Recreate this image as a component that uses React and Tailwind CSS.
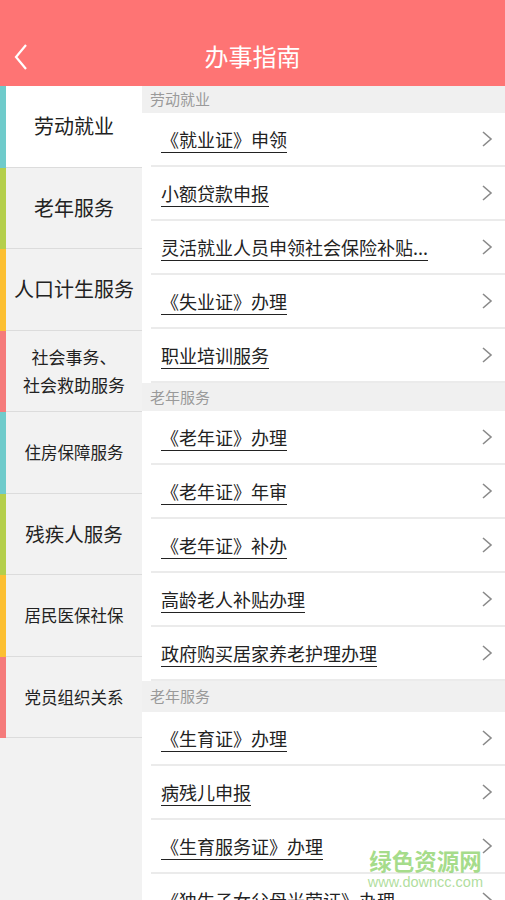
import React from 'react';

const menu = [
    { lines: ['劳动就业'], size: 'text-[20px]', strip: 'bg-[#6fcbcb]', active: true },
    { lines: ['老年服务'], size: 'text-[20px]', strip: 'bg-[#b4cf4b]' },
    { lines: ['人口计生服务'], size: 'text-[20px]', strip: 'bg-[#fcbf31]' },
    { lines: ['社会事务、', '社会救助服务'], size: 'text-[17px]', strip: 'bg-[#f57b7b]' },
    { lines: ['住房保障服务'], size: 'text-[16.5px]', strip: 'bg-[#6fcbcb]' },
    { lines: ['残疾人服务'], size: 'text-[19.5px]', strip: 'bg-[#b4cf4b]' },
    { lines: ['居民医保社保'], size: 'text-[16.5px]', strip: 'bg-[#fcbf31]' },
    { lines: ['党员组织关系'], size: 'text-[16.5px]', strip: 'bg-[#f57b7b]' },
];

const sections = [
    {
        title: '劳动就业',
        h: 'h-[27px]',
        items: ['《就业证》申领', '小额贷款申报', '灵活就业人员申领社会保险补贴...', '《失业证》办理', '职业培训服务'],
    },
    {
        title: '老年服务',
        h: 'h-[28px]',
        items: ['《老年证》办理', '《老年证》年审', '《老年证》补办', '高龄老人补贴办理', '政府购买居家养老护理办理'],
    },
    {
        title: '老年服务',
        h: 'h-[31px]',
        items: ['《生育证》办理', '病残儿申报', '《生育服务证》办理', '《独生子女父母光荣证》办理'],
    },
];

function Chevron() {
    return (
        <svg width="12" height="18" viewBox="0 0 12 18" className="shrink-0">
            <path d="M2 2 L10 9 L2 16" fill="none" stroke="#8a8a8a" strokeWidth="1.6" />
        </svg>
    );
}

export default function App() {
    return (
        <div className="relative w-[505px] h-[900px] overflow-hidden bg-white text-[#222] font-['Noto_Sans_CJK_SC','Noto_Sans',sans-serif]">
            {/* Header */}
            <header className="h-[86px] bg-[#fe7474] flex items-end pb-[14px] relative">
                <svg width="16" height="28" viewBox="0 0 16 28" className="ml-[13px] mb-[1px]">
                    <path d="M13 2 L3 14 L13 26" fill="none" stroke="white" strokeWidth="2.2" />
                </svg>
                <h1 className="absolute left-0 right-0 bottom-[14px] text-center text-white text-[24px] leading-[32px]">办事指南</h1>
            </header>

            <div className="flex h-[814px]">
                {/* Sidebar */}
                <aside className="w-[142px] shrink-0 bg-[#f2f2f2]">
                    {menu.map((m, i) => (
                        <div key={i} className={`flex h-[81.5px] ${m.active ? 'bg-white' : ''}`}>
                            <div className={`w-[6px] shrink-0 ${m.strip}`} />
                            <div className={`flex-1 flex flex-col items-center justify-center border-b border-[#dcdcdc] ${m.size} leading-[28px] text-[#222]`}>
                                {m.lines.map((l, j) => (
                                    <span key={j}>{l}</span>
                                ))}
                            </div>
                        </div>
                    ))}
                </aside>

                {/* Content list */}
                <main className="flex-1 bg-white">
                    {sections.map((s, si) => (
                        <section key={si}>
                            <div className={`${s.h} bg-[#f0f0f0] flex items-center pl-[8px] text-[15px] text-[#9a9a9a]`}>{s.title}</div>
                            {s.items.map((it, ii) => (
                                <div key={ii} className="h-[54px] ml-[9px] border-b-2 border-[#ebebeb] flex items-center justify-between pr-[12px] pl-[10px]">
                                    <span className="text-[18px] underline underline-offset-[5px] decoration-1 truncate">{it}</span>
                                    <Chevron />
                                </div>
                            ))}
                        </section>
                    ))}
                </main>
            </div>

            {/* Watermark */}
            <div className="absolute right-[22px] bottom-[9px] flex flex-col items-center pointer-events-none">
                <span className="text-[22.5px] font-bold leading-[27px] text-[#8ed36b]/80">绿色资源网</span>
                <span className="text-[14.5px] leading-[17px] text-[#9bd584]/80 font-['Liberation_Sans',sans-serif]">www.downcc.com</span>
            </div>
        </div>
    );
}
